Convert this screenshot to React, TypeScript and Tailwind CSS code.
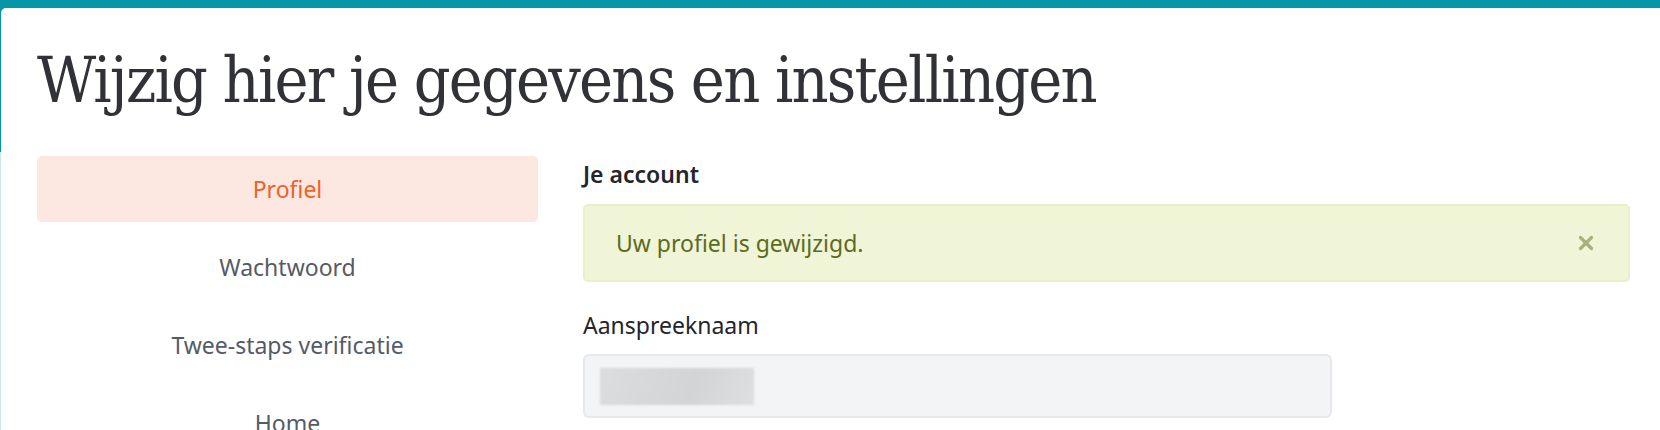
import React from 'react';
import { X } from 'lucide-react';

const navItems = ['Profiel', 'Wachtwoord', 'Twee-staps verificatie', 'Home'];

const App: React.FC = () => {
  const active = 'Profiel';

  return (
    <div className="h-[430px] overflow-hidden pt-2 pl-px bg-[linear-gradient(to_bottom,#0596a8_152px,#c9e8ec_152px)] font-['Noto_Sans',sans-serif]">
      <div className="min-h-[422px] bg-white rounded-tl-[5px] pl-[36px] pr-[30px]">
        <h1 className="pt-[36px] pb-[40px] text-[64px] leading-[72px] text-[#303238] font-['DejaVu_Serif_Condensed','DejaVu_Serif',serif] tracking-[-1.8px]">
          Wijzig hier je gegevens en instellingen
        </h1>

        <div className="flex gap-[45px]">
          {/* sidebar */}
          <nav className="w-[501px] shrink-0 flex flex-col gap-3">
            {navItems.map((item) => (
              <a
                key={item}
                href="#"
                className={
                  item === active
                    ? 'h-[66px] rounded-[5px] bg-[#fce8e0] text-[#f0602a] text-[23px] flex items-center justify-center'
                    : 'h-[66px] rounded-[5px] text-[#555b66] text-[23px] flex items-center justify-center'
                }
              >
                {item}
              </a>
            ))}
          </nav>

          {/* form */}
          <div className="flex-1">
            <h2 className="text-[23px] font-semibold text-[#23252b] leading-[30px] mt-[3px]">Je account</h2>

            <div className="mt-[15px] h-[78px] rounded-[5px] border-2 border-[#e8f0c9] bg-[#f1f5d8] flex items-center justify-between pl-[31px] pr-[31px]">
              <span className="text-[23px] text-[#5c6b1e]">Uw profiel is gewijzigd.</span>
              <button type="button" className="text-[#a7b27a]">
                <X size={22} strokeWidth={3.5} />
              </button>
            </div>

            <label className="block mt-[28px] text-[23px] text-[#23252b] leading-[30px]">Aanspreeknaam</label>
            <div className="mt-[14px] w-[749px] h-[64px] rounded-[6px] border-2 border-[#e6e8eb] bg-[#f3f4f6] flex items-center px-[15px]">
              <div className="w-[154px] h-[37px] bg-[linear-gradient(110deg,#dcdddf,#d3d4d6_60%,#dedfe1)] blur-[1px]" />
            </div>
          </div>
        </div>
      </div>
    </div>
  );
};

export default App;
